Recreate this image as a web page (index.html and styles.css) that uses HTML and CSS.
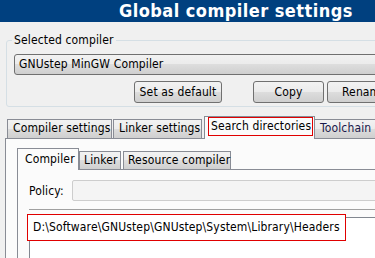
FILE: index.html
```html
<!DOCTYPE html>
<html>
<head>
<meta charset="utf-8">
<link rel="stylesheet" href="styles.css">
</head>
<body>
<div class="header"><span class="title">Global compiler settings</span></div>
<div class="main">
  <fieldset class="group">
    <legend class="legend">Selected compiler</legend>
    <div class="combo">GNUstep MinGW Compiler</div>
    <div class="btnrow">
      <div class="btn btn-default">Set as default</div>
      <div class="btn btn-copy">Copy</div>
      <div class="btn btn-rename">Rename</div>
    </div>
  </fieldset>
  <div class="tabs">
    <div class="tab t1">Compiler settings</div>
    <div class="tab t2">Linker settings</div>
    <div class="tab sel t3"><span class="mark">Search directories</span></div>
    <div class="tab t4">Toolchain executables</div>
  </div>
  <div class="panel">
    <div class="itabs">
      <div class="itab isel i1">Compiler</div>
      <div class="itab i2">Linker</div>
      <div class="itab i3">Resource compiler</div>
    </div>
    <div class="ipanel">
      <div class="policy">
        <span class="plabel">Policy:</span>
        <div class="pcombo"></div>
      </div>
      <div class="sep">
        <div class="list">
          <div class="item">D:\Software\GNUstep\GNUstep\System\Library\Headers</div>
        </div>
      </div>
    </div>
  </div>
</div>
</body>
</html>
```
FILE: styles.css
```css
html, body {
  margin: 0;
  padding: 0;
}
body {
  width: 375px;
  height: 258px;
  overflow: hidden;
  background: #f0f0f0;
  font-family: "DejaVu Sans Condensed", "DejaVu Sans", sans-serif;
  font-size: 12px;
  letter-spacing: 0.14px;
  color: #000;
}
.header {
  height: 22px;
  background: #00407f;
  color: #fff;
  padding-left: 119px;
  white-space: nowrap;
}
.title {
  font-family: "DejaVu Sans Condensed", "DejaVu Sans", sans-serif;
  font-weight: bold;
  font-size: 18px;
  letter-spacing: 0.45px;
  line-height: 22px;
}
.main {
  width: 460px;
  padding-left: 5px;
}
.group {
  margin: 11px 0 0 1px;
  padding: 7px 0 3px 7px;
  border: 1px solid #d5dfe5;
  border-radius: 3px;
  min-width: 0;
}
.legend {
  padding: 0 2px;
  margin-left: -2px;
  line-height: 14px;
  white-space: nowrap;
}
.combo {
  height: 19px;
  line-height: 19px;
  border: 1px solid #707070;
  border-radius: 3px;
  padding-left: 4px;
  background: linear-gradient(#f2f2f2, #ebebeb 50%, #dddddd 50%, #cfcfcf);
  white-space: nowrap;
}
.btnrow {
  display: flex;
  margin-top: 6px;
  padding-left: 120px;
}
.btn {
  box-sizing: border-box;
  height: 22px;
  line-height: 20px;
  border: 1px solid #707070;
  border-radius: 3px;
  background: linear-gradient(#f2f2f2, #ebebeb 50%, #dddddd 50%, #cfcfcf);
  text-align: center;
  white-space: nowrap;
  flex: none;
}
.btn-default { width: 88px; }
.btn-copy { width: 71px; margin-left: 31px; }
.btn-rename { width: 80px; margin-left: 3px; text-align: left; padding-left: 14px; }
.tabs {
  display: flex;
  align-items: flex-end;
  margin-top: 9px;
  padding-left: 2px;
  height: 22px;
}
.tab {
  box-sizing: border-box;
  height: 19px;
  line-height: 17px;
  border: 1px solid #898c95;
  border-bottom: none;
  padding: 0 5px;
  background: linear-gradient(#f2f2f2, #ebebeb 50%, #dddddd 50%, #cfcfcf);
  white-space: nowrap;
  flex: none;
  margin-right: 1px;
}
.t1 { width: 105px; }
.t2 { width: 89px; }
.t4 { color: #1a1a4a; }
.tab.sel {
  height: 23px;
  margin: 0 -1px -1px 1px;
  padding: 0 0 0 3px;
  background: #fbfbfb;
  position: relative;
  z-index: 1;
  width: 111px;
}
.mark {
  display: block;
  border: 1px solid #e00000;
  height: 17px;
  line-height: 16px;
  padding-left: 2px;
  margin-right: 1px;
}
.panel {
  border: 1px solid #898c95;
  border-right: none;
  background: #fbfbfb;
  height: 200px;
  padding: 9px 0 0 11px;
}
.itabs {
  display: flex;
  align-items: flex-end;
  height: 21px;
}
.itab {
  box-sizing: border-box;
  height: 18px;
  line-height: 17px;
  border: 1px solid #898c95;
  border-bottom: none;
  padding: 0 4px;
  background: linear-gradient(#f2f2f2, #ebebeb 50%, #dddddd 50%, #cfcfcf);
  white-space: nowrap;
  flex: none;
  margin-right: 1px;
}
.i1 { width: 62px; }
.i2 { width: 42px; }
.i3 { width: 108px; margin-left: 1px; }
.itab.isel {
  height: 22px;
  margin-bottom: -1px;
  margin-right: 0;
  background: #fbfbfb;
  position: relative;
  z-index: 1;
  padding-left: 7px;
  line-height: 20px;
}
.ipanel {
  border: 1px solid #898c95;
  border-right: none;
  height: 120px;
  padding: 10px 0 0 11px;
}
.policy {
  display: flex;
  align-items: center;
  height: 21px;
}
.plabel {
  width: 43px;
  flex: none;
}
.pcombo {
  flex: 1;
  box-sizing: border-box;
  height: 21px;
  border: 1px solid #cdcdcd;
  border-radius: 2px;
  background: #f4f4f4;
}
.sep {
  margin-top: 8px;
  border-top: 1px solid #a0a0a0;
  padding-top: 7px;
}
.list {
  border: 1px solid #828790;
  border-right: none;
  background: #fff;
  height: 60px;
}
.item {
  position: relative;
  display: inline-block;
  margin: -4px 0 0 -3px;
  border: 1px solid #e00000;
  background: #fff;
  height: 25px;
  line-height: 25px;
  padding: 0 5px 0 5px;
  white-space: nowrap;
}
```
